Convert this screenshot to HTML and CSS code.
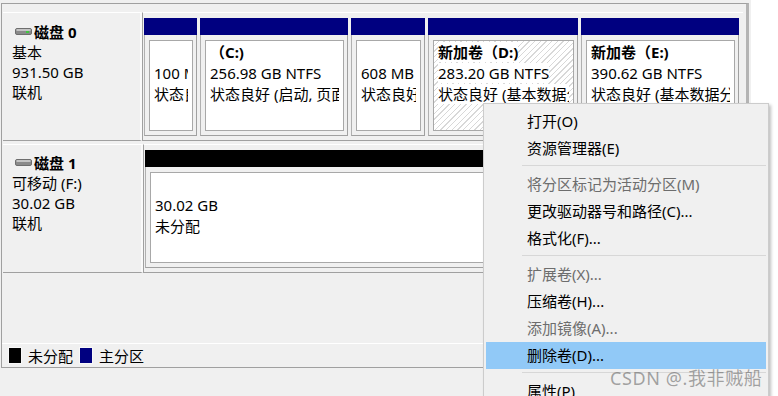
FILE: index.html
```html
<!DOCTYPE html>
<html lang="zh-CN">
<head>
<meta charset="utf-8">
<title>磁盘管理</title>
<link rel="stylesheet" href="styles.css">
</head>
<body>
<div class="page">
  <div class="frame">
    <div class="disk disk0">
      <div class="disk-label">
        <div class="disk-title">
          <svg class="disk-icon" width="17" height="7" viewBox="0 0 17 7"><rect x="0.5" y="0.5" width="16" height="6" rx="1.5" fill="#8a8a8a" stroke="#6e6e6e"/><rect x="1.5" y="1" width="14" height="2" fill="#c4c4c4"/><rect x="11" y="3" width="3" height="2" fill="#3ec93e"/></svg>
          <span>磁盘 0</span>
        </div>
        <div>基本</div>
        <div>931.50 GB</div>
        <div>联机</div>
      </div>
      <div class="parts">
        <div class="cell w1">
          <div class="bar primary"></div>
          <div class="cell-body"><div class="vol"><div class="vt">&nbsp;</div><div class="ln">100 MB</div><div class="ln">状态良</div></div></div>
        </div>
        <div class="cell w2">
          <div class="bar primary"></div>
          <div class="cell-body"><div class="vol"><div class="vt">（C:)</div><div class="ln">256.98 GB NTFS</div><div class="ln">状态良好 (启动, 页面</div></div></div>
        </div>
        <div class="cell w3">
          <div class="bar primary"></div>
          <div class="cell-body"><div class="vol"><div class="vt">&nbsp;</div><div class="ln">608 MB</div><div class="ln">状态良好</div></div></div>
        </div>
        <div class="cell w4">
          <div class="bar primary"></div>
          <div class="cell-body"><div class="vol hatched"><div class="vt"><span>新加卷（D:)</span></div><div class="ln"><span>283.20 GB NTFS</span></div><div class="ln"><span>状态良好 (基本数据分</span></div></div></div>
        </div>
        <div class="cell w5">
          <div class="bar primary"></div>
          <div class="cell-body"><div class="vol"><div class="vt">新加卷（E:)</div><div class="ln">390.62 GB NTFS</div><div class="ln">状态良好 (基本数据分</div></div></div>
        </div>
      </div>
    </div>
    <div class="disk disk1">
      <div class="disk-label">
        <div class="disk-title">
          <svg class="disk-icon" width="17" height="7" viewBox="0 0 17 7"><rect x="0.5" y="0.5" width="16" height="6" rx="1.5" fill="#8a8a8a" stroke="#6e6e6e"/><rect x="1.5" y="1" width="14" height="2" fill="#c4c4c4"/></svg>
          <span>磁盘 1</span>
        </div>
        <div>可移动 (F:)</div>
        <div>30.02 GB</div>
        <div>联机</div>
      </div>
      <div class="parts">
        <div class="cell wfull">
          <div class="bar unalloc"></div>
          <div class="cell-body"><div class="vol"><div class="vt">&nbsp;</div><div class="ln">30.02 GB</div><div class="ln">未分配</div></div></div>
        </div>
      </div>
    </div>
    <div class="spacer"></div>
    <div class="legend">
      <span class="swatch black"></span><span class="ltext">未分配</span>
      <span class="swatch blue"></span><span class="ltext">主分区</span>
    </div>
  </div>
</div>

<div class="menu">
  <div class="item">打开(O)</div>
  <div class="item">资源管理器(E)</div>
  <div class="sep"></div>
  <div class="item disabled">将分区标记为活动分区(M)</div>
  <div class="item">更改驱动器号和路径(C)...</div>
  <div class="item">格式化(F)...</div>
  <div class="sep"></div>
  <div class="item disabled">扩展卷(X)...</div>
  <div class="item">压缩卷(H)...</div>
  <div class="item disabled">添加镜像(A)...</div>
  <div class="item active">删除卷(D)...</div>
  <div class="sep"></div>
  <div class="item">属性(P)</div>
</div>

<div class="watermark">CSDN @.我非贼船</div>
</body>
</html>
```

FILE: styles.css
```css
* { box-sizing: border-box; }

html, body {
  margin: 0;
  padding: 0;
}

body {
  width: 778px;
  height: 396px;
  overflow: hidden;
  position: relative;
  background: #ffffff;
  font-family: "Noto Sans", "Noto Sans CJK SC", sans-serif;
  font-size: 15px;
  color: #000;
}

.page {
  width: 751px;
  height: 396px;
  background: #f0f0f0;
  padding-top: 3px;
}

.frame {
  margin-left: 1px;
  width: 748px;
  height: 365px;
  border: 1px solid #a0a0a0;
  border-right: 3px solid #b4b4b4;
  background: #f0f0f0;
  display: flex;
  flex-direction: column;
  padding-top: 8px;
  gap: 3px;
}

.disk {
  display: flex;
  height: 129px;
  flex: none;
}

.disk-label {
  width: 140px;
  margin-left: 1px;
  padding: 9px 0 0 9px;
  line-height: 20px;
  border-top: 1px solid #ffffff;
  border-bottom: 1px solid #a0a0a0;
  border-right: 2px solid #fafafa;
  white-space: nowrap;
}

.disk1 .disk-label {
  padding-top: 8px;
}

.disk-title {
  display: flex;
  align-items: center;
  font-weight: bold;
}

.disk-icon {
  margin: 0 2px 0 3px;
  position: relative;
  top: -1px;
}

.parts {
  flex: 1;
  display: flex;
  gap: 3px;
  margin-right: 3px;
  padding: 5px 4px 4px 1px;
  border-left: 1px solid #a0a0a0;
  border-top: 1px solid #ffffff;
  border-bottom: 1px solid #a0a0a0;
}

.cell {
  display: flex;
  flex-direction: column;
  flex: none;
}

.w1 { width: 53px; }
.w2 { width: 148px; }
.w3 { width: 74px; }
.w4 { width: 150px; }
.w5 { width: 158px; }
.wfull { flex: 1; }

.bar {
  height: 17px;
  flex: none;
}

.primary { background: #000080; }
.unalloc { background: #000000; }

.cell-body {
  flex: 1;
  padding: 5px 3px 4px 4px;
  border-left: 1px solid #b0b0b0;
  border-right: 1px solid #a0a0a0;
  border-bottom: 1px solid #a0a0a0;
  background: #f0f0f0;
}

.vol {
  height: 91px;
  background: #ffffff;
  border: 1px solid #a8a8a8;
  padding: 1px 4px 0 4px;
  line-height: 21px;
  white-space: nowrap;
  overflow: hidden;
}

.vt, .ln {
  overflow: hidden;
  white-space: nowrap;
}

.vt { font-weight: bold; }

.hatched {
  background: repeating-linear-gradient(135deg, #ffffff 0 3px, #d8d8d8 3px 4px);
}

.hatched span { background: #ffffff; }

.spacer { flex: 1; }

.legend {
  height: 24px;
  border-top: 1px solid #ffffff;
  display: flex;
  align-items: center;
  padding-left: 6px;
  line-height: 20px;
}

.swatch {
  width: 14px;
  height: 17px;
  border: 1px solid #f8f8f8;
  margin-right: 6px;
}

.swatch.black { background: #000000; }
.swatch.blue { background: #000080; }

.ltext { margin-right: 6px; }

.menu {
  position: absolute;
  left: 483px;
  top: 103px;
  width: 286px;
  height: 310px;
  background: #f0f0f0;
  border: 1px solid #cccccc;
  padding: 4px 2px;
  box-shadow: 2px 2px 3px rgba(0, 0, 0, 0.25);
}

.item {
  height: 27px;
  line-height: 27px;
  padding-left: 41px;
  white-space: nowrap;
}

.item.disabled { color: #6d6d6d; }

.item.active { background: #91c9f7; }

.sep {
  height: 9px;
  padding-top: 3px;
  margin-left: 36px;
}

.sep::before {
  content: "";
  display: block;
  height: 1px;
  background: #d7d7d7;
}

.watermark {
  position: absolute;
  left: 610px;
  top: 366px;
  font-size: 18px;
  line-height: 24px;
  letter-spacing: 0.6px;
  color: rgba(80, 80, 80, 0.5);
  white-space: nowrap;
}
```
